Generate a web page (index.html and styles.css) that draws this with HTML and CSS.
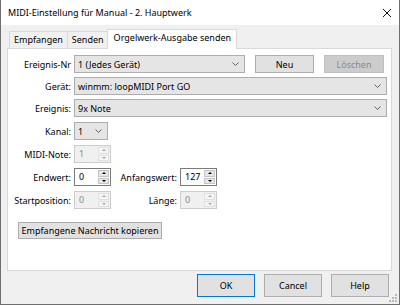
FILE: index.html
```html
<!DOCTYPE html>
<html>
<head>
  <title>MIDI-Einstellung</title>
  <link rel="stylesheet" href="styles.css">
</head>
<body>
  <div class="window">
    <div class="titlebar">
      <span class="title">MIDI-Einstellung für Manual - 2. Hauptwerk</span>
      <svg class="close" width="10" height="10" viewBox="0 0 10 10">
        <path d="M1 1 L9 9 M9 1 L1 9" stroke="#111" stroke-width="1" fill="none"/>
      </svg>
    </div>

    <div class="content">
      <div class="tabs">
        <div class="tab">Empfangen</div>
        <div class="tab">Senden</div>
        <div class="tab active">Orgelwerk-Ausgabe senden</div>
      </div>

      <div class="panel">
        <div class="row r1">
          <label class="lbl">Ereignis-Nr</label>
          <div class="combo w-nr">
            <span>1 (Jedes Gerät)</span>
            <svg class="chev" width="7" height="4" viewBox="0 0 7 4"><path d="M0.5 0.5 L3.5 3.5 L6.5 0.5" stroke="#606060" fill="none"/></svg>
          </div>
          <button class="btn neu">Neu</button>
          <button class="btn loeschen" disabled>Löschen</button>
        </div>

        <div class="row r2">
          <label class="lbl">Gerät:</label>
          <div class="combo w-full">
            <span>winmm: loopMIDI Port GO</span>
            <svg class="chev" width="7" height="4" viewBox="0 0 7 4"><path d="M0.5 0.5 L3.5 3.5 L6.5 0.5" stroke="#606060" fill="none"/></svg>
          </div>
        </div>

        <div class="row r2">
          <label class="lbl">Ereignis:</label>
          <div class="combo w-full">
            <span>9x Note</span>
            <svg class="chev" width="7" height="4" viewBox="0 0 7 4"><path d="M0.5 0.5 L3.5 3.5 L6.5 0.5" stroke="#606060" fill="none"/></svg>
          </div>
        </div>

        <div class="row r3">
          <label class="lbl">Kanal:</label>
          <div class="combo w-kanal">
            <span>1</span>
            <svg class="chev" width="7" height="4" viewBox="0 0 7 4"><path d="M0.5 0.5 L3.5 3.5 L6.5 0.5" stroke="#606060" fill="none"/></svg>
          </div>
        </div>

        <div class="row r4">
          <label class="lbl">MIDI-Note:</label>
          <div class="spin off">
            <span class="val">1</span>
            <div class="arrows"><span class="arr"><i class="up"></i></span><span class="arr"><i class="down"></i></span></div>
          </div>
        </div>

        <div class="row r4">
          <label class="lbl">Endwert:</label>
          <div class="spin">
            <span class="val">0</span>
            <div class="arrows"><span class="arr"><i class="up"></i></span><span class="arr"><i class="down"></i></span></div>
          </div>
          <label class="lbl2">Anfangswert:</label>
          <div class="spin">
            <span class="val">127</span>
            <div class="arrows"><span class="arr"><i class="up"></i></span><span class="arr"><i class="down"></i></span></div>
          </div>
        </div>

        <div class="row r4">
          <label class="lbl">Startposition:</label>
          <div class="spin off">
            <span class="val">0</span>
            <div class="arrows"><span class="arr"><i class="up"></i></span><span class="arr"><i class="down"></i></span></div>
          </div>
          <label class="lbl2">Länge:</label>
          <div class="spin off">
            <span class="val">0</span>
            <div class="arrows"><span class="arr"><i class="up"></i></span><span class="arr"><i class="down"></i></span></div>
          </div>
        </div>

        <button class="btn kopieren">Empfangene Nachricht kopieren</button>
      </div>

      <div class="footer">
        <button class="btn dlg default">OK</button>
        <button class="btn dlg">Cancel</button>
        <button class="btn dlg">Help</button>
      </div>
    </div>

    <svg class="grip" width="9" height="9" viewBox="0 0 9 9">
      <rect x="6" y="0" width="2" height="2" fill="#b8b8b8"/>
      <rect x="3" y="3" width="2" height="2" fill="#b8b8b8"/>
      <rect x="6" y="3" width="2" height="2" fill="#b8b8b8"/>
      <rect x="0" y="6" width="2" height="2" fill="#b8b8b8"/>
      <rect x="3" y="6" width="2" height="2" fill="#b8b8b8"/>
      <rect x="6" y="6" width="2" height="2" fill="#b8b8b8"/>
    </svg>
  </div>
</body>
</html>
```

FILE: styles.css
```css
/* dialog */
body {
  margin: 0;
  font-family: "Noto Sans", sans-serif;
  font-size: 9px;
  color: #000;
  background: #f0f0f0;
}

.window {
  position: relative;
  width: 400px;
  height: 305px;
  box-sizing: border-box;
  border: 1px solid #6e6e6e;
  border-top: none;
  background: #f0f0f0;
  display: flex;
  flex-direction: column;
}

.titlebar {
  height: 25px;
  background: #fff;
  display: flex;
  align-items: center;
  justify-content: space-between;
  padding: 0 7px 0 7px;
  flex-shrink: 0;
}

.title {
  font-size: 9px;
  padding-bottom: 1px;
}

.content {
  padding: 6px 7px 0 6px;
}

/* tabs */
.tabs {
  display: flex;
  align-items: flex-end;
  padding-left: 2px;
  height: 17px;
  position: relative;
  z-index: 1;
}

.tab {
  height: 16px;
  line-height: 15px;
  padding: 0 4px;
  border: 1px solid #d9d9d9;
  border-bottom: none;
  background: #f0f0f0;
  box-sizing: content-box;
  margin-left: -1px;
}

.tab:first-child {
  margin-left: 0;
}

.tab.active {
  height: 19px;
  line-height: 16px;
  padding: 0 5px 0 6px;
  margin-left: -2px;
  margin-bottom: -1px;
  background: #fff;
}

.panel {
  height: 223px;
  box-sizing: border-box;
  border: 1px solid #d9d9d9;
  background: #fff;
  padding: 6px 0 0 0;
}

.row {
  display: flex;
  align-items: center;
}

.r2 {
  margin-top: 4px;
}

.r3 {
  margin-top: 5px;
}

.r4 {
  margin-top: 5px;
}

.lbl {
  width: 63px;
  margin-right: 3px;
  text-align: right;
  white-space: nowrap;
}

.lbl2 {
  width: 66px;
  margin-right: 3px;
  text-align: right;
}

/* combos */
.combo {
  height: 18px;
  box-sizing: border-box;
  border: 1px solid #adadad;
  background: #e5e5e5;
  display: flex;
  align-items: center;
  justify-content: space-between;
  padding: 0 5px 0 3px;
}

.w-nr {
  width: 171px;
}

.w-full {
  width: 313px;
}

.w-kanal {
  width: 34px;
}

/* buttons */
.btn {
  font-family: "Noto Sans", sans-serif;
  font-size: 9px;
  color: #000;
  height: 18px;
  box-sizing: border-box;
  border: 1px solid #adadad;
  background: #e1e1e1;
  padding: 0;
}

.neu {
  width: 59px;
  margin-left: 10px;
}

.loeschen {
  width: 60px;
  margin-left: 10px;
  background: #cccccc;
  border-color: #bfbfbf;
  color: #8a8a8a;
}

.kopieren {
  display: block;
  width: 144px;
  height: 17px;
  margin: 13px 0 0 10px;
}

/* spin boxes */
.spin {
  width: 37px;
  height: 18px;
  box-sizing: border-box;
  border: 1px solid #7a7a7a;
  background: #fff;
  display: flex;
}

.spin .val {
  flex: 1;
  padding-left: 4px;
  line-height: 16px;
}

.spin .arrows {
  width: 11px;
  display: flex;
  flex-direction: column;
  gap: 1px;
  padding: 1px 1px 1px 0;
}

.arr {
  flex: 1;
  background: #e6e6e6;
  border: 1px solid #c4c4c4;
  display: flex;
  align-items: center;
  justify-content: center;
}

.arr i {
  width: 0;
  height: 0;
  border-left: 2px solid transparent;
  border-right: 2px solid transparent;
}

.arr .up {
  border-bottom: 2px solid #000;
}

.arr .down {
  border-top: 2px solid #000;
}

.spin.off {
  border-color: #cccccc;
  background: #f0f0f0;
  color: #8d8d8d;
}

.spin.off .arr {
  background: #f4f4f4;
  border-color: #e0e0e0;
}

.spin.off .up {
  border-bottom-color: #a8a8a8;
}

.spin.off .down {
  border-top-color: #a8a8a8;
}

/* footer */
.footer {
  display: flex;
  justify-content: flex-end;
  gap: 9px;
  margin-top: 3px;
  padding-right: 3px;
}

.dlg {
  width: 58px;
  height: 23px;
}

.default {
  border-color: #0078d7;
}

.grip {
  position: absolute;
  right: 1px;
  bottom: 1px;
}
```
